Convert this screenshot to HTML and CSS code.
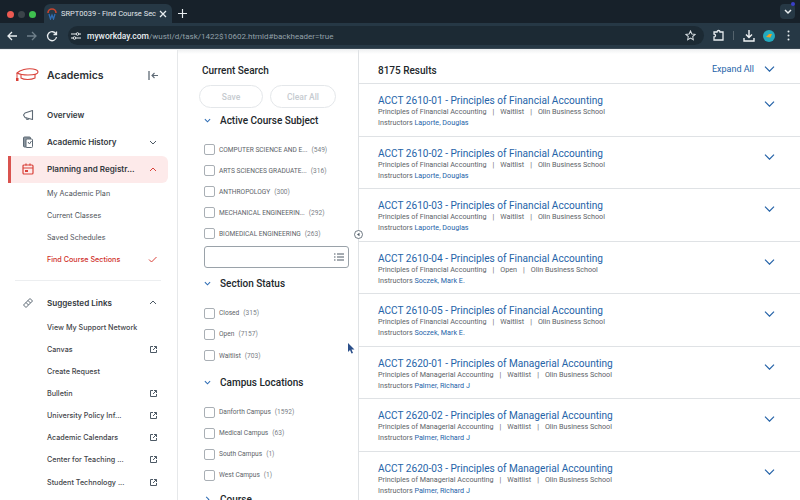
FILE: index.html
```html
<!DOCTYPE html>
<html lang="en">
<head>
<meta charset="UTF-8">
<title>SRPT0039 - Find Course Sections</title>
<link rel="stylesheet" href="styles.css">
</head>
<body>

<div class="tabstrip">
    <div class="lights">
        <span class="light red"></span>
        <span class="light grey"></span>
        <span class="light green"></span>
    </div>
    <div class="tab">
        <svg class="favicon" width="12" height="12" viewBox="0 0 12 12"><path d="M2 5a4 4 0 0 1 8 0" fill="none" stroke="#c8452f" stroke-width="1.6"/><path d="M3 6l1.5 5L6 7l1.5 4L9 6" fill="none" stroke="#2f6db5" stroke-width="1.3"/></svg>
        <span class="tab-title">SRPT0039 - Find Course Sec</span>
        <svg width="8" height="8" viewBox="0 0 8 8"><path d="M1 1l6 6M7 1l-6 6" stroke="#e8edf0" stroke-width="1.3"/></svg>
    </div>
    <svg class="newtab" width="9" height="9" viewBox="0 0 10 10"><path d="M5 0v10M0 5h10" stroke="#e8edf0" stroke-width="1.3"/></svg>
    <div class="tab-menu">
        <svg width="8" height="6" viewBox="0 0 8 6"><path d="M1 1l3 3 3-3" fill="none" stroke="#e8edf0" stroke-width="1.5"/></svg>
        <span class="tab-dot"></span>
    </div>
</div>

<div class="toolbar">
    <svg class="nav" width="12" height="12" viewBox="0 0 12 12"><path d="M11 6H2M6 2L2 6l4 4" fill="none" stroke="#e8edf0" stroke-width="1.3"/></svg>
    <svg class="nav" width="12" height="12" viewBox="0 0 12 12"><path d="M1 6h9M6 2l4 4-4 4" fill="none" stroke="#6f7f8a" stroke-width="1.3"/></svg>
    <svg class="nav" width="12" height="12" viewBox="0 0 12 12"><path d="M10 4a4.5 4.5 0 1 0 .5 3M10.5 1.5v3h-3" fill="none" stroke="#e8edf0" stroke-width="1.3"/></svg>
    <div class="omnibox">
        <svg class="tune" width="10" height="10" viewBox="0 0 10 10"><path d="M0 3h5M8 3h2M0 7h2M5 7h5" stroke="#e8edf0" stroke-width="1.1"/><circle cx="6.5" cy="3" r="1.3" fill="none" stroke="#e8edf0"/><circle cx="3.5" cy="7" r="1.3" fill="none" stroke="#e8edf0"/></svg>
        <span class="url"><b>myworkday.com</b>/wustl/d/task/1422$10602.htmld#backheader=true</span>
        <svg width="11" height="11" viewBox="0 0 12 12"><path d="M6 1l1.5 3.3 3.5.4-2.6 2.4.7 3.5L6 8.9l-3.1 1.700.7-3.5L1 4.700l3.5-.4z" fill="none" stroke="#d5dce0" stroke-width="1.1"/></svg>
    </div>
    <svg class="ext" width="13" height="13" viewBox="0 0 13 13"><path d="M2 3h3a1.5 1.5 0 0 1 3 0h3v8H2V8a1.500 1.500 0 0 0 0-3z" fill="none" stroke="#e8edf0" stroke-width="1.3"/></svg>
    <span class="divider"></span>
    <svg class="dl" width="12" height="12" viewBox="0 0 12 12"><path d="M6 0v7M3 4.5l3 3 3-3M1 8v3h10V8" fill="none" stroke="#f0f3f5" stroke-width="1.4"/></svg>
    <svg class="avatar" width="12" height="12" viewBox="0 0 12 12"><circle cx="6" cy="6" r="6" fill="#24a9bd"/><path d="M3 7l3-3h3L7.5 7.5z" fill="#f0a020"/></svg>
    <svg class="kebab" width="3" height="11" viewBox="0 0 3 11"><circle cx="1.5" cy="1.5" r="1" fill="#e8edf0"/><circle cx="1.5" cy="5.5" r="1" fill="#e8edf0"/><circle cx="1.5" cy="9.5" r="1" fill="#e8edf0"/></svg>
</div>

<div class="app">

    <aside class="sidebar">
        <div class="side-head">
            <svg width="24" height="16" viewBox="0 0 24 16"><path d="M2 6C5 3 12 1 18 2c3 .5 5 1.5 5 3 0 2-5 3-10 3S4 7 2 6z" fill="none" stroke="#d9423a" stroke-width="1.1"/><path d="M6 7.5V11c3 2 10 2 14 0V7" fill="none" stroke="#d9423a" stroke-width="1.1"/><path d="M2 6v5" stroke="#d9423a"/><rect x="1" y="11" width="2.5" height="3" fill="#d9423a"/></svg>
            <span class="side-title">Academics</span>
            <svg class="collapse" width="10" height="9" viewBox="0 0 10 9"><path d="M1 0v9" stroke="#5e6a75" stroke-width="1.3"/><path d="M10 4.5H4M6.5 2L4 4.5 6.5 7" fill="none" stroke="#5e6a75" stroke-width="1.1"/></svg>
        </div>

        <div class="nav-row">
            <svg class="nav-icon" width="12" height="12" viewBox="0 0 12 12"><path d="M10.5 1.500v9L3 8.500 1.500 6 3 4z" fill="none" stroke="#5e6a75" stroke-width="1.1" stroke-linejoin="round"/><path d="M4 8.500l.5 2h2l-.4-1.500" fill="none" stroke="#5e6a75" stroke-width=".9"/></svg>
            <span>Overview</span>
        </div>
        <div class="nav-row">
            <svg class="nav-icon" width="12" height="12" viewBox="0 0 12 12"><rect x="1.5" y="1" width="7" height="10" rx="1" fill="#8b96a0" stroke="#5e6a75"/><rect x="4" y="3" width="6.5" height="8.5" rx="1" fill="#fff" stroke="#5e6a75"/><path d="M6 6l1.5 2 2-3" fill="none" stroke="#5e6a75"/></svg>
            <span>Academic History</span>
            <svg class="chev" width="8" height="5" viewBox="0 0 8 5"><path d="M1 1l3 3 3-3" fill="none" stroke="#4d5965"/></svg>
        </div>
        <div class="nav-row active">
            <svg class="nav-icon" width="12" height="12" viewBox="0 0 12 12"><rect x="1" y="2" width="10" height="9" rx="1" fill="none" stroke="#d9423a" stroke-width="1.2"/><path d="M1 5h10M4 .5v2M8 .5v2" stroke="#d9423a" stroke-width="1.2"/><rect x="3" y="7" width="3" height="2" fill="#d9423a"/></svg>
            <span>Planning and Registr...</span>
            <svg class="chev" width="8" height="5" viewBox="0 0 8 5"><path d="M1 4l3-3 3 3" fill="none" stroke="#d9423a"/></svg>
        </div>
        <div class="sub-row">My Academic Plan</div>
        <div class="sub-row">Current Classes</div>
        <div class="sub-row">Saved Schedules</div>
        <div class="sub-row current">
            <span>Find Course Sections</span>
            <svg class="chev" width="9" height="7" viewBox="0 0 9 7"><path d="M1 3.5L3.5 6l5-5" fill="none" stroke="#d9423a"/></svg>
        </div>

        <hr class="side-rule">

        <div class="nav-row links">
            <svg class="nav-icon" width="12" height="12" viewBox="0 0 12 12"><path d="M1.5 8L8 1.500 10.500 4 4 10.500zM4 5.500L6.500 8M6 3.500L8.500 6" fill="none" stroke="#5e6a75"/></svg>
            <span>Suggested Links</span>
            <svg class="chev" width="8" height="5" viewBox="0 0 8 5"><path d="M1 4l3-3 3 3" fill="none" stroke="#4d5965"/></svg>
        </div>
        <div class="sub-row dark">View My Support Network</div>
        <div class="sub-row dark"><span>Canvas</span><svg class="chev" width="7" height="7" viewBox="0 0 7 7"><path d="M3 .5H.5v6h6V4M3 4L6.5.5M4 .5h2.5V3" fill="none" stroke="#4d5965"/></svg></div>
        <div class="sub-row dark">Create Request</div>
        <div class="sub-row dark"><span>Bulletin</span><svg class="chev" width="7" height="7" viewBox="0 0 7 7"><path d="M3 .5H.5v6h6V4M3 4L6.5.5M4 .5h2.5V3" fill="none" stroke="#4d5965"/></svg></div>
        <div class="sub-row dark"><span>University Policy Inf...</span><svg class="chev" width="7" height="7" viewBox="0 0 7 7"><path d="M3 .5H.5v6h6V4M3 4L6.5.5M4 .5h2.5V3" fill="none" stroke="#4d5965"/></svg></div>
        <div class="sub-row dark"><span>Academic Calendars</span><svg class="chev" width="7" height="7" viewBox="0 0 7 7"><path d="M3 .5H.5v6h6V4M3 4L6.5.5M4 .5h2.5V3" fill="none" stroke="#4d5965"/></svg></div>
        <div class="sub-row dark"><span>Center for Teaching ...</span><svg class="chev" width="7" height="7" viewBox="0 0 7 7"><path d="M3 .5H.5v6h6V4M3 4L6.5.5M4 .5h2.5V3" fill="none" stroke="#4d5965"/></svg></div>
        <div class="sub-row dark"><span>Student Technology ...</span><svg class="chev" width="7" height="7" viewBox="0 0 7 7"><path d="M3 .5H.5v6h6V4M3 4L6.5.5M4 .5h2.5V3" fill="none" stroke="#4d5965"/></svg></div>
    </aside>

    <section class="filters">
        <div class="filter-title">Current Search</div>
        <div class="filter-btns">
            <span class="ghost save">Save</span>
            <span class="ghost clear">Clear All</span>
        </div>

        <div class="group-head">
            <svg width="7" height="5" viewBox="0 0 8 5"><path d="M1 1l3 3 3-3" fill="none" stroke="#2f6db5" stroke-width="1.2"/></svg>
            <span>Active Course Subject</span>
        </div>
        <div class="checks">
            <div class="check"><i></i><span>COMPUTER SCIENCE AND E...</span><em>(549)</em></div>
            <div class="check"><i></i><span>ARTS SCIENCES GRADUATE...</span><em>(316)</em></div>
            <div class="check"><i></i><span>ANTHROPOLOGY</span><em>(300)</em></div>
            <div class="check"><i></i><span>MECHANICAL ENGINEERIN...</span><em>(292)</em></div>
            <div class="check"><i></i><span>BIOMEDICAL ENGINEERING</span><em>(263)</em></div>
        </div>
        <div class="picker">
            <svg width="10" height="8" viewBox="0 0 10 8"><path d="M0 1h1.5M3 1h7M0 4h1.5M3 4h7M0 7h1.5M3 7h7" stroke="#4d5965"/></svg>
        </div>

        <div class="group-head status">
            <svg width="7" height="5" viewBox="0 0 8 5"><path d="M1 1l3 3 3-3" fill="none" stroke="#2f6db5" stroke-width="1.2"/></svg>
            <span>Section Status</span>
        </div>
        <div class="checks">
            <div class="check"><i></i><span>Closed</span><em>(315)</em></div>
            <div class="check"><i></i><span>Open</span><em>(7157)</em></div>
            <div class="check"><i></i><span>Waitlist</span><em>(703)</em></div>
        </div>

        <div class="group-head campus">
            <svg width="7" height="5" viewBox="0 0 8 5"><path d="M1 1l3 3 3-3" fill="none" stroke="#2f6db5" stroke-width="1.2"/></svg>
            <span>Campus Locations</span>
        </div>
        <div class="checks">
            <div class="check"><i></i><span>Danforth Campus</span><em>(1592)</em></div>
            <div class="check"><i></i><span>Medical Campus</span><em>(63)</em></div>
            <div class="check"><i></i><span>South Campus</span><em>(1)</em></div>
            <div class="check"><i></i><span>West Campus</span><em>(1)</em></div>
        </div>

        <div class="group-head course">
            <svg width="5" height="7" viewBox="0 0 5 8"><path d="M1 1l3 3-3 3" fill="none" stroke="#2f6db5" stroke-width="1.2"/></svg>
            <span>Course</span>
        </div>

        <svg class="handle" width="9" height="9" viewBox="0 0 9 9"><circle cx="4.5" cy="4.5" r="4" fill="#fff" stroke="#4d5965" stroke-width=".8"/><path d="M5.5 2.800v3.400L3 4.500z" fill="#4d5965"/></svg>
        <svg class="cursor" width="7" height="11" viewBox="0 0 7 11"><path d="M0 0v9l2-2 1.5 3.5L5 10 3.5 6.500h3z" fill="#2b4f8a"/></svg>
    </section>

    <main class="results">
        <div class="results-head">
            <span class="count">8175 Results</span>
            <span class="expand">Expand All</span>
            <svg width="11" height="6" viewBox="0 0 11 6"><path d="M1 .7l4.5 4.5L10 .7" fill="none" stroke="#2563a8" stroke-width="1.2"/></svg>
        </div>

        <div class="result">
            <div class="result-body">
                <a class="result-title">ACCT 2610-01 - Principles of Financial Accounting</a>
                <div class="meta">Principles of Financial Accounting<b>|</b>Waitlist<b>|</b>Olin Business School</div>
                <div class="meta">Instructors <a>Laporte, Douglas</a></div>
            </div>
            <svg class="row-chev" width="11" height="6" viewBox="0 0 11 6"><path d="M1 .7l4.5 4.5L10 .7" fill="none" stroke="#2563a8" stroke-width="1.2"/></svg>
        </div>
        <div class="result">
            <div class="result-body">
                <a class="result-title">ACCT 2610-02 - Principles of Financial Accounting</a>
                <div class="meta">Principles of Financial Accounting<b>|</b>Waitlist<b>|</b>Olin Business School</div>
                <div class="meta">Instructors <a>Laporte, Douglas</a></div>
            </div>
            <svg class="row-chev" width="11" height="6" viewBox="0 0 11 6"><path d="M1 .7l4.5 4.5L10 .7" fill="none" stroke="#2563a8" stroke-width="1.2"/></svg>
        </div>
        <div class="result">
            <div class="result-body">
                <a class="result-title">ACCT 2610-03 - Principles of Financial Accounting</a>
                <div class="meta">Principles of Financial Accounting<b>|</b>Waitlist<b>|</b>Olin Business School</div>
                <div class="meta">Instructors <a>Laporte, Douglas</a></div>
            </div>
            <svg class="row-chev" width="11" height="6" viewBox="0 0 11 6"><path d="M1 .7l4.5 4.5L10 .7" fill="none" stroke="#2563a8" stroke-width="1.2"/></svg>
        </div>
        <div class="result">
            <div class="result-body">
                <a class="result-title">ACCT 2610-04 - Principles of Financial Accounting</a>
                <div class="meta">Principles of Financial Accounting<b>|</b>Open<b>|</b>Olin Business School</div>
                <div class="meta">Instructors <a>Soczek, Mark E.</a></div>
            </div>
            <svg class="row-chev" width="11" height="6" viewBox="0 0 11 6"><path d="M1 .7l4.5 4.5L10 .7" fill="none" stroke="#2563a8" stroke-width="1.2"/></svg>
        </div>
        <div class="result">
            <div class="result-body">
                <a class="result-title">ACCT 2610-05 - Principles of Financial Accounting</a>
                <div class="meta">Principles of Financial Accounting<b>|</b>Waitlist<b>|</b>Olin Business School</div>
                <div class="meta">Instructors <a>Soczek, Mark E.</a></div>
            </div>
            <svg class="row-chev" width="11" height="6" viewBox="0 0 11 6"><path d="M1 .7l4.5 4.5L10 .7" fill="none" stroke="#2563a8" stroke-width="1.2"/></svg>
        </div>
        <div class="result">
            <div class="result-body">
                <a class="result-title">ACCT 2620-01 - Principles of Managerial Accounting</a>
                <div class="meta">Principles of Managerial Accounting<b>|</b>Waitlist<b>|</b>Olin Business School</div>
                <div class="meta">Instructors <a>Palmer, Richard J</a></div>
            </div>
            <svg class="row-chev" width="11" height="6" viewBox="0 0 11 6"><path d="M1 .7l4.5 4.5L10 .7" fill="none" stroke="#2563a8" stroke-width="1.2"/></svg>
        </div>
        <div class="result">
            <div class="result-body">
                <a class="result-title">ACCT 2620-02 - Principles of Managerial Accounting</a>
                <div class="meta">Principles of Managerial Accounting<b>|</b>Waitlist<b>|</b>Olin Business School</div>
                <div class="meta">Instructors <a>Palmer, Richard J</a></div>
            </div>
            <svg class="row-chev" width="11" height="6" viewBox="0 0 11 6"><path d="M1 .7l4.5 4.5L10 .7" fill="none" stroke="#2563a8" stroke-width="1.2"/></svg>
        </div>
        <div class="result">
            <div class="result-body">
                <a class="result-title">ACCT 2620-03 - Principles of Managerial Accounting</a>
                <div class="meta">Principles of Managerial Accounting<b>|</b>Waitlist<b>|</b>Olin Business School</div>
                <div class="meta">Instructors <a>Palmer, Richard J</a></div>
            </div>
            <svg class="row-chev" width="11" height="6" viewBox="0 0 11 6"><path d="M1 .7l4.5 4.5L10 .7" fill="none" stroke="#2563a8" stroke-width="1.2"/></svg>
        </div>
    </main>
</div>

</body>
</html>
```

FILE: styles.css
```css
/* Browser chrome on top, three columns under it */
html, body {
    margin: 0;
    height: 100%;
    overflow: hidden;
}
body {
    font-family: Roboto, "Liberation Sans", sans-serif;
    background: #fff;
    color: #333;
    display: flex;
    flex-direction: column;
}

.tabstrip {
    height: 23px;
    background: #17212a;
    display: flex;
    align-items: flex-end;
    flex-shrink: 0;
}
.lights {
    display: flex;
    gap: 4px;
    padding: 0 8px 5px 7px;
}
.light {
    width: 7px;
    height: 7px;
    border-radius: 50%;
}
.light.red { background: #ec5a52; }
.light.grey { background: #3b4349; }
.light.green { background: #3fc04f; }
.tab {
    width: 128px;
    height: 19px;
    background: #263845;
    border-radius: 6px 6px 0 0;
    display: flex;
    align-items: center;
    padding: 0 5px 0 2px;
    box-sizing: border-box;
}
.favicon {
    margin-right: 3px;
    flex-shrink: 0;
}
.tab-title {
    flex: 1;
    min-width: 0;
    color: #e0e6ea;
    font-size: 7.5px;
    white-space: nowrap;
    margin-right: 6px;
}
.newtab {
    margin: 0 0 5px 6px;
}
.tab-menu {
    margin-left: auto;
    margin-right: 5px;
    margin-bottom: 4px;
    width: 15px;
    height: 15px;
    background: #263845;
    border-radius: 4px;
    display: flex;
    align-items: center;
    justify-content: center;
    position: relative;
}
.tab-dot {
    position: absolute;
    top: -2px;
    right: 0;
    width: 4px;
    height: 4px;
    border-radius: 50%;
    background: #3a3fc8;
}

.toolbar {
    height: 25px;
    background: #263845;
    display: flex;
    align-items: center;
    flex-shrink: 0;
    padding-left: 6px;
    border-bottom: 1px solid #3a4853;
}
.nav {
    margin-right: 8px;
}
.omnibox {
    width: 636px;
    height: 19px;
    margin-left: 2px;
    background: #1c2a34;
    border-radius: 10px;
    display: flex;
    align-items: center;
    padding: 0 8px 0 3px;
    box-sizing: border-box;
}
.tune {
    margin-right: 6px;
}
.url {
    flex: 1;
    font-size: 8px;
    color: #93a0a9;
    white-space: nowrap;
}
.url b {
    font-size: 8.5px;
    color: #e8edf0;
    font-weight: 500;
}
.ext {
    margin-left: 8px;
}
.divider {
    width: 1px;
    height: 9px;
    background: #55636d;
    margin: 0 9px 0 8px;
}
.avatar {
    margin-left: 8px;
}
.kebab {
    margin-left: 12px;
}

.app {
    flex: 1;
    display: flex;
    min-height: 0;
    border-top: 1px solid #eceff1;
}

.sidebar {
    width: 178px;
    flex-shrink: 0;
    box-sizing: border-box;
    border-right: 1px solid #e6e8ea;
    font-family: Inter, sans-serif;
    overflow: hidden;
}
.side-head {
    height: 28px;
    margin-top: 11px;
    padding: 0 19px 0 15px;
    display: flex;
    align-items: center;
}
.side-title {
    margin-left: 8px;
    font-size: 10.5px;
    font-weight: 600;
    color: #2b2f33;
    flex: 1;
}
.nav-row {
    height: 27px;
    margin-left: 9px;
    width: 159px;
    box-sizing: border-box;
    padding: 0 11px 0 13px;
    display: flex;
    align-items: center;
    font-size: 8.1px;
    font-weight: 600;
    color: #33383d;
    white-space: nowrap;
}
.side-head + .nav-row {
    margin-top: 12.5px;
}
.nav-icon {
    margin-right: 13px;
    flex-shrink: 0;
}
.chev {
    margin-left: auto;
}
.active {
    margin-left: 8px;
    width: 160px;
    background: #fdeaea;
    border-radius: 0 6px 6px 0;
    border-left: 3px solid #d9534f;
    padding-left: 11px;
}
.sub-row {
    height: 22.15px;
    margin-left: 47px;
    width: 110px;
    display: flex;
    align-items: center;
    font-size: 7.2px;
    color: #4d5258;
    white-space: nowrap;
}
.current {
    color: #cf2f2a;
    font-weight: 500;
}
.dark {
    color: #3f4449;
    font-weight: 500;
}
.side-rule {
    border: 0;
    border-top: 1px solid #eceef0;
    margin: 8.5px 16px 0 15px;
}
.links {
    margin-top: 8.5px;
}

.filters {
    width: 181px;
    flex-shrink: 0;
    box-sizing: border-box;
    border-right: 1px solid #dfe2e5;
    padding: 0 9px 0 21px;
    position: relative;
    background: linear-gradient(#f1f2f3, #fff 4px);
}
.filter-title {
    margin: 15px 0 0 3px;
    font-size: 10px;
    font-weight: 500;
    color: #22272b;
}
.filter-btns {
    display: flex;
    gap: 7px;
    margin-top: 9px;
}
.ghost {
    height: 23px;
    border: 1px solid #e4e7ea;
    border-radius: 12px;
    box-sizing: border-box;
    display: flex;
    align-items: center;
    justify-content: center;
    font-size: 8.5px;
    font-weight: 500;
    color: #c6cbd0;
}
.save { width: 64px; }
.clear { width: 66px; }
.group-head {
    display: flex;
    align-items: center;
    gap: 9px;
    margin: 5px 0 0 5px;
    height: 14px;
    font-size: 10px;
    font-weight: 500;
    color: #22272b;
}
.group-head svg {
    width: 7px;
    flex-shrink: 0;
}
.status { margin-top: 9px; }
.campus { margin-top: 14.5px; }
.course { margin-top: 12px; }
.checks {
    margin-top: 17px;
    padding-left: 5px;
    display: flex;
    flex-direction: column;
    gap: 10.1px;
}
.check {
    height: 11px;
    display: flex;
    align-items: center;
    font-size: 6.6px;
    color: #5d6368;
    white-space: nowrap;
}
.check i {
    width: 11px;
    height: 11px;
    box-sizing: border-box;
    border: 1px solid #a9afb5;
    border-radius: 2px;
    margin-right: 4px;
    flex-shrink: 0;
}
.check em {
    font-style: normal;
    margin-left: 4px;
    color: #7a8086;
}
.picker {
    height: 22px;
    width: 145px;
    margin: 6.5px 0 0 5px;
    box-sizing: border-box;
    border: 1px solid #9aa2a9;
    border-radius: 3px;
    display: flex;
    align-items: center;
    justify-content: flex-end;
    padding-right: 4px;
}
.handle {
    position: absolute;
    top: 180px;
    right: -5px;
    z-index: 2;
}
.cursor {
    position: absolute;
    top: 293px;
    right: 3px;
}

.results {
    flex: 1;
    min-width: 0;
    overflow: hidden;
}
.results-head {
    height: 33px;
    display: flex;
    align-items: center;
    padding: 0 25px 0 19px;
    border-bottom: 1px solid #dfe2e5;
    background: linear-gradient(#f1f2f3, #fff 4px);
}
.results-head > * {
    position: relative;
    top: 2px;
}
.count {
    font-size: 10px;
    font-weight: 500;
    color: #22272b;
    flex: 1;
    margin-top: 3px;
}
.expand {
    font-size: 9px;
    color: #2563a8;
    margin-right: 10px;
}
.result {
    height: 52.5px;
    box-sizing: border-box;
    border-bottom: 1px solid #dfe2e5;
    display: flex;
    align-items: flex-start;
    padding: 11px 25px 0 19px;
}
.result-body {
    flex: 1;
    min-width: 0;
    line-height: 11px;
}
.result-title {
    display: block;
    font-size: 10.1px;
    line-height: 11px;
    color: #2563a8;
}
.row-chev {
    margin-top: 6px;
}
.meta {
    font-size: 7.2px;
    color: #5d6368;
}
.meta a {
    color: #2563a8;
}
.meta b {
    font-weight: 400;
    margin: 0 6px;
}
```
